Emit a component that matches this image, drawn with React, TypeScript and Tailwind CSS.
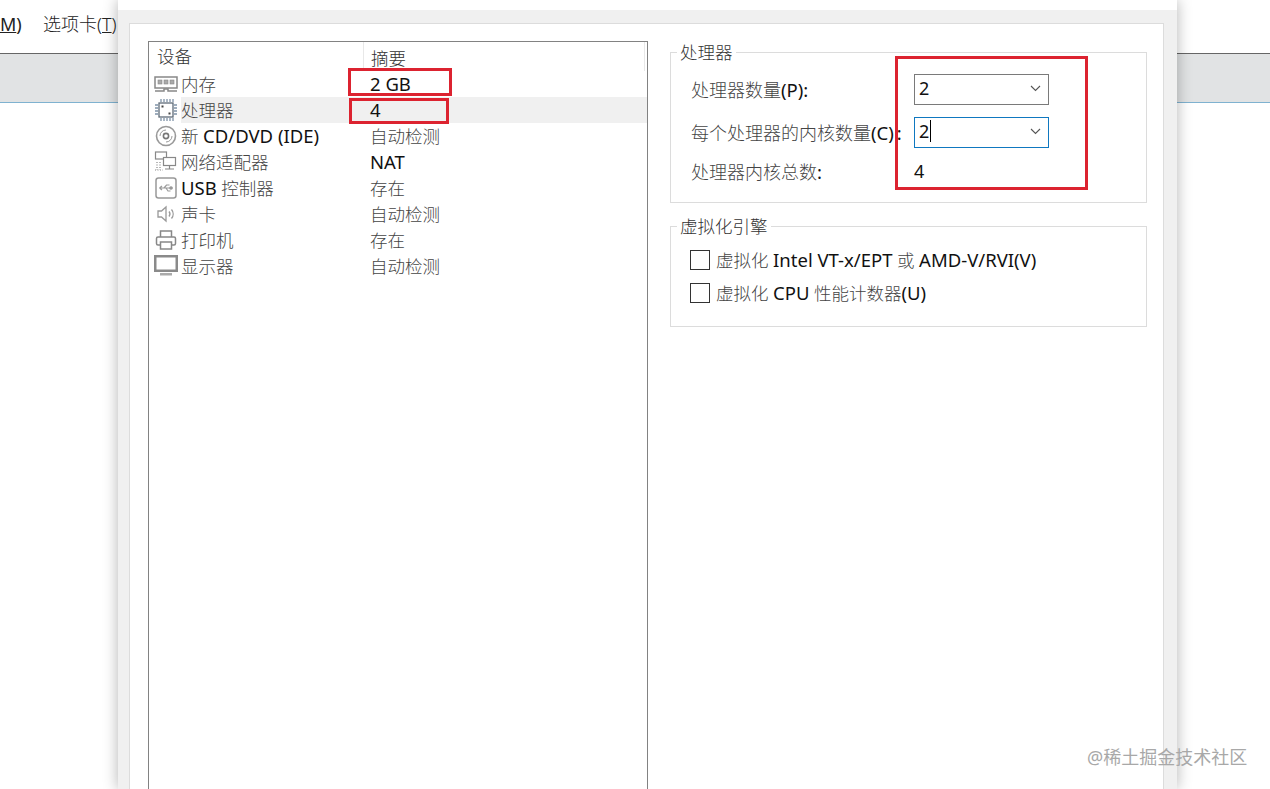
import React from "react";

const font = "font-['Noto_Sans','Noto_Sans_CJK_SC',sans-serif]";
const latin = "text-[18.5px] font-normal text-[#111]";

const MemoryIcon = () => (
  <svg width="24" height="18" viewBox="0 0 24 18" fill="none" stroke="#888" strokeWidth="1.5">
    <rect x="1" y="2" width="22" height="11" />
    <rect x="4" y="5" width="4" height="4" fill="#aaa" strokeWidth="0.6" />
    <rect x="10" y="5" width="4" height="4" fill="#aaa" strokeWidth="0.6" />
    <rect x="16" y="5" width="4" height="4" fill="#aaa" strokeWidth="0.6" />
    <path d="M1 16h9v-2h4v2h9" />
  </svg>
);

const CpuIcon = () => (
  <svg width="24" height="24" viewBox="0 0 24 24" fill="none" stroke="#7f93a8" strokeWidth="1.3">
    <rect x="5" y="5" width="14" height="14" stroke="#5f6b78" />
    <path d="M7 1v3M10 1v3M13 1v3M16 1v3M19 1v3M7 20v3M10 20v3M13 20v3M16 20v3M19 20v3M1 7h3M1 10h3M1 13h3M1 16h3M20 7h3M20 10h3M20 13h3M20 16h3" />
    <rect x="7.5" y="7.5" width="2" height="2" fill="#444" stroke="none" />
    <rect x="14.5" y="14.5" width="2" height="2" fill="#444" stroke="none" />
  </svg>
);

const DiscIcon = () => (
  <svg width="22" height="22" viewBox="0 0 22 22" fill="none" stroke="#999" strokeWidth="1.6">
    <circle cx="11" cy="11" r="9.5" />
    <circle cx="11" cy="11" r="2.6" stroke="#777" />
    <path d="M5 11a6 6 0 0 1 6-6M17 11a6 6 0 0 1-6 6" strokeWidth="1" />
  </svg>
);

const NetworkIcon = () => (
  <svg width="24" height="22" viewBox="0 0 24 22" fill="none" stroke="#888" strokeWidth="1.2">
    <rect x="1.5" y="1" width="11" height="7" />
    <rect x="9.5" y="6.5" width="12" height="8" fill="#fff" />
    <path d="M15.5 14.5v3M11 18h9" />
    <path d="M1 19h8M3 11v8M6 11v8" strokeDasharray="1 1.5" />
  </svg>
);

const UsbIcon = () => (
  <svg width="22" height="22" viewBox="0 0 22 22" fill="none" stroke="#999" strokeWidth="1.2">
    <rect x="1" y="1" width="20" height="20" rx="2.5" strokeWidth="1.5" />
    <path d="M4.5 11h13M4.5 11l2.5-2M4.5 11l2.500 2M9 11l2.500-3h3M11 11l2 3h2.500" />
    <circle cx="16" cy="11" r="1.2" fill="#999" />
  </svg>
);

const SoundIcon = () => (
  <svg width="20" height="20" viewBox="0 0 20 20" fill="none" stroke="#999" strokeWidth="1.3">
    <path d="M2 7h3.500L10 3v14l-4.500-4H2z" />
    <path d="M13 7.500a4 4 0 0 1 0 5M15.500 5.500a7 7 0 0 1 0 9" />
  </svg>
);

const PrinterIcon = () => (
  <svg width="22" height="22" viewBox="0 0 22 22" fill="none" stroke="#888" strokeWidth="1.5">
    <path d="M5.500 8V2h11v6" />
    <rect x="1.500" y="8" width="19" height="8" rx="1.500" />
    <rect x="5.500" y="13" width="11" height="7" fill="#fff" />
  </svg>
);

const MonitorIcon = () => (
  <svg width="24" height="22" viewBox="0 0 24 22" fill="none">
    <rect x="1.250" y="1.250" width="21.500" height="14.500" stroke="#8a8a8a" strokeWidth="2.500" />
    <rect x="6" y="18" width="12" height="2.500" fill="#aaa" />
  </svg>
);

const Chevron = () => (
  <svg width="11" height="7" viewBox="0 0 11 7" fill="none" stroke="#555" strokeWidth="1.100">
    <path d="M1 1l4.500 4.500L10 1" />
  </svg>
);

const devices = [
  { icon: <MemoryIcon />, name: <>内存</>, summary: <span className={latin}>2 GB</span> },
  { icon: <CpuIcon />, name: <>处理器</>, summary: <span className={latin}>4</span>, selected: true },
  { icon: <DiscIcon />, name: <>新 <span className={latin}>CD/DVD (IDE)</span></>, summary: <>自动检测</> },
  { icon: <NetworkIcon />, name: <>网络适配器</>, summary: <span className={latin}>NAT</span> },
  { icon: <UsbIcon />, name: <><span className={latin}>USB</span> 控制器</>, summary: <>存在</> },
  { icon: <SoundIcon />, name: <>声卡</>, summary: <>自动检测</> },
  { icon: <PrinterIcon />, name: <>打印机</>, summary: <>存在</> },
  { icon: <MonitorIcon />, name: <>显示器</>, summary: <>自动检测</> },
];

const GroupBox = ({ title, className, children }: { title: string; className: string; children: React.ReactNode }) => (
  <div className={`relative border border-[#dcdcdc] ${className}`}>
    <span className="absolute left-[6px] top-[-13px] bg-white px-[3px] text-[17.5px] leading-[25px] font-light text-[#333]">
      {title}
    </span>
    {children}
  </div>
);

const Select = ({ focused }: { focused?: boolean }) => (
  <div
    className={`flex h-[31px] w-[135px] items-center justify-between border pl-[4px] pr-[7px] pb-[2px] text-[18px] text-[#111] ${
      focused ? "border-[#0f78c0]" : "border-[#7a7a7a]"
    }`}
  >
    <span className="relative">
      2
      {focused && <span className="absolute right-[-2px] top-[2px] h-[22px] w-px bg-black" />}
    </span>
    <Chevron />
  </div>
);

const Check = ({ children }: { children: React.ReactNode }) => (
  <div className="flex h-[20px] items-center gap-[6px] text-[17.5px] font-light text-[#444]">
    <span className="h-[20px] w-[20px] border border-[#333] bg-white" />
    <span className="whitespace-pre">{children}</span>
  </div>
);

const SideBand = ({ children }: { children?: React.ReactNode }) => (
  <>
    <div className="flex h-[53px] items-center whitespace-nowrap pb-[4px] text-[18px] text-[#222]">{children}</div>
    <div className="h-[50px] border-y border-t-[#666] border-b-[#7fb2d0] bg-[#e1e3e4]" />
  </>
);

export default function App() {
  return (
    <div className={`relative flex h-[789px] w-[1270px] overflow-hidden bg-white ${font}`}>
      <div className="w-[118px] shrink-0 overflow-hidden">
        <SideBand>
          <span className="w-[43px]">
            <span className="underline">M</span>)
          </span>
          <span className="font-light">
            选项卡(<span className="underline">T</span>)
          </span>
        </SideBand>
      </div>

      <div className="relative z-10 flex h-full w-[1059px] shrink-0 flex-col overflow-hidden bg-white shadow-[0_0_14px_rgba(0,0,0,0.3)]">
        <div className="h-[10px] shrink-0" />
        <div className="flex-1 bg-[#f0f0f0] pl-[11px] pr-[13px] pt-[13px]">
          <div className="flex h-[800px] border border-[#dcdcdc] bg-white pl-[18px] pt-[17px]">
            <div className="w-[500px] shrink-0 border border-[#828282] text-[17.5px] font-light text-[#444]">
              <div className="flex h-[29px] items-center">
                <span className="w-[214px] pl-[8px] text-[#333]">设备</span>
                <span className="h-full w-[282px] border-x border-x-[#e8e8e8] pl-[7px] leading-[32px] text-[#333]">摘要</span>
              </div>
              {devices.map((d, i) => (
                <div key={i} className="flex h-[26px] items-center">
                  <span className="flex w-[32px] shrink-0 items-center justify-center pl-[1px]">{d.icon}</span>
                  <span className={`flex h-full w-[182px] items-center ${d.selected ? "bg-[#f0f0f0]" : ""}`}>
                    <span className="whitespace-pre">{d.name}</span>
                  </span>
                  <span className={`flex h-full w-[284px] items-center pl-[7px] ${d.selected ? "bg-[#f0f0f0]" : ""}`}>
                    {d.summary}
                  </span>
                </div>
              ))}
            </div>

            <div className="ml-[22px] w-[477px] shrink-0 pt-[11px]">
              <GroupBox title="处理器" className="h-[151px] pl-[20px] pt-[21px]">
                <div className="flex h-[31px] items-center">
                  <span className="w-[223px] whitespace-nowrap text-[18px] font-light text-[#444]">
                    处理器数量<span className={latin}>(P):</span>
                  </span>
                  <Select />
                </div>
                <div className="mt-[12px] flex h-[31px] items-center">
                  <span className="w-[223px] whitespace-nowrap text-[18px] font-light text-[#444]">
                    每个处理器的内核数量<span className={latin}>(C)<span className="pl-[3px]">:</span></span>
                  </span>
                  <Select focused />
                </div>
                <div className="mt-[8px] flex h-[31px] items-center">
                  <span className="w-[223px] whitespace-nowrap text-[18px] font-light text-[#444]">
                    处理器内核总数<span className={latin}>:</span>
                  </span>
                  <span className="text-[18px] text-[#111]">4</span>
                </div>
              </GroupBox>

              <GroupBox title="虚拟化引擎" className="mt-[23px] h-[101px] pl-[19px] pt-[23px]">
                <Check>
                  虚拟化 <span className={latin}>Intel VT-x/EPT</span> 或 <span className={latin}>AMD-V/RVI(V)</span>
                </Check>
                <div className="mt-[13px]">
                  <Check>
                    虚拟化 <span className={latin}>CPU</span> 性能计数器<span className={latin}>(U)</span>
                  </Check>
                </div>
              </GroupBox>
            </div>
          </div>
        </div>
      </div>

      <div className="flex-1 overflow-hidden">
        <SideBand />
      </div>

      {/* red annotations drawn on top of the shot */}
      <div className="absolute left-[348px] top-[68px] z-20 h-[28px] w-[104px] border-[3px] border-[#dc2330]" />
      <div className="absolute left-[349px] top-[98px] z-20 h-[26px] w-[100px] border-[3px] border-[#dc2330]" />
      <div className="absolute left-[895px] top-[56px] z-20 h-[134px] w-[193px] border-[3px] border-[#dc2330]" />

      <span className="absolute left-[1087px] top-[744px] z-20 whitespace-nowrap text-[18px] leading-[26px] text-[#a8a8a8]">
        @稀土掘金技术社区
      </span>
    </div>
  );
}
